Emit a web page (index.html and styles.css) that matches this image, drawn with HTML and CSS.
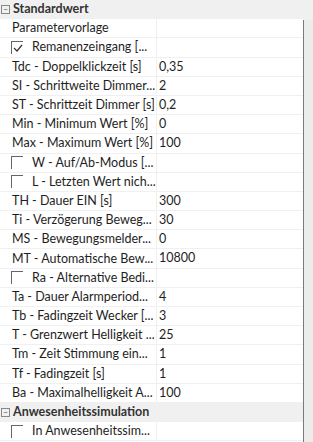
FILE: index.html
```html
<!DOCTYPE html>
<html lang="de">
<head>
<meta charset="UTF-8">
<title>Eigenschaften</title>
<link rel="stylesheet" href="styles.css">
</head>
<body>

<div class="panel">
  <div class="props">
    <div class="row group">
      <span class="toggle">&minus;</span>
      <span class="group-title">Standardwert</span>
    </div>
    <div class="row"><div class="name">Parametervorlage</div><div class="value"></div></div>
    <div class="row">
      <div class="name"><span class="check on"><svg width="10" height="8" viewBox="0 0 10 8"><polyline points="1,4 4,7 9,1" fill="none" stroke="#333" stroke-width="1.2"/></svg></span>Remanenzeingang [...</div>
      <div class="value"></div>
    </div>
    <div class="row"><div class="name">Tdc - Doppelklickzeit [s]</div><div class="value">0,35</div></div>
    <div class="row"><div class="name">SI - Schrittweite Dimmer...</div><div class="value">2</div></div>
    <div class="row"><div class="name">ST - Schrittzeit Dimmer [s]</div><div class="value">0,2</div></div>
    <div class="row"><div class="name">Min - Minimum Wert [%]</div><div class="value">0</div></div>
    <div class="row"><div class="name">Max - Maximum Wert [%]</div><div class="value">100</div></div>
    <div class="row"><div class="name"><span class="check"></span>W - Auf/Ab-Modus [...</div><div class="value"></div></div>
    <div class="row"><div class="name"><span class="check"></span>L - Letzten Wert nich...</div><div class="value"></div></div>
    <div class="row"><div class="name">TH - Dauer EIN [s]</div><div class="value">300</div></div>
    <div class="row"><div class="name">Ti - Verzögerung Beweg...</div><div class="value">30</div></div>
    <div class="row"><div class="name">MS - Bewegungsmelder...</div><div class="value">0</div></div>
    <div class="row"><div class="name">MT - Automatische Bew...</div><div class="value">10800</div></div>
    <div class="row"><div class="name"><span class="check"></span>Ra - Alternative Bedi...</div><div class="value"></div></div>
    <div class="row"><div class="name">Ta - Dauer Alarmperiod...</div><div class="value">4</div></div>
    <div class="row"><div class="name">Tb - Fadingzeit Wecker [...</div><div class="value">3</div></div>
    <div class="row"><div class="name">T - Grenzwert Helligkeit ...</div><div class="value">25</div></div>
    <div class="row"><div class="name">Tm - Zeit Stimmung ein...</div><div class="value">1</div></div>
    <div class="row"><div class="name">Tf - Fadingzeit [s]</div><div class="value">1</div></div>
    <div class="row"><div class="name">Ba - Maximalhelligkeit A...</div><div class="value">100</div></div>
    <div class="row group">
      <span class="toggle">&minus;</span>
      <span class="group-title">Anwesenheitssimulation</span>
    </div>
    <div class="row"><div class="name"><span class="check"></span>In Anwesenheitssim...</div><div class="value"></div></div>
  </div>
  <div class="scroll">
    <div class="scroll-top"></div>
    <div class="thumb"></div>
  </div>
</div>

</body>
</html>
```

FILE: styles.css
```css
body {
  margin: 0;
  font-family: Lato, "Noto Sans", sans-serif;
  font-size: 12.5px;
  color: #1e1e1e;
  background-color: #fff;
}

.panel {
  display: flex;
  width: 313px;
  height: 442px;
  overflow: hidden;
}

.props {
  width: 303px;
}

.row {
  display: grid;
  grid-template-columns: 157px 1fr;
  height: 19.2px;
  box-sizing: border-box;
  border-bottom: 1px solid #f0f0f0;
  line-height: 18px;
  white-space: nowrap;
}

.name {
  display: flex;
  align-items: center;
  padding-left: 12px;
  border-right: 1px solid #efefef;
  overflow: hidden;
}

.value {
  padding-left: 2px;
}

.group {
  display: flex;
  align-items: center;
  background-color: #f0f0f0;
  border-bottom-color: #f0f0f0;
}

.toggle {
  width: 7px;
  height: 7px;
  margin-left: 1px;
  border: 1px solid #888;
  font-size: 8px;
  line-height: 6px;
  text-align: center;
  color: #444;
}

.group-title {
  margin-left: 3px;
  font-weight: bold;
  color: #333;
}

.check {
  width: 11px;
  height: 12px;
  margin-left: -1px;
  margin-right: 9px;
  border-top: 1px solid #666;
  border-left: 1px solid #666;
  display: flex;
  align-items: flex-end;
  justify-content: flex-end;
}

.check svg {
  margin-bottom: 2px;
}

.scroll {
  width: 10px;
  display: flex;
  flex-direction: column;
}

.scroll-top {
  height: 20px;
  background-color: #f0f0f0;
}

.thumb {
  flex: 1;
  border-left: 1px solid #7a7a7a;
  background-color: #ececec;
}
```
